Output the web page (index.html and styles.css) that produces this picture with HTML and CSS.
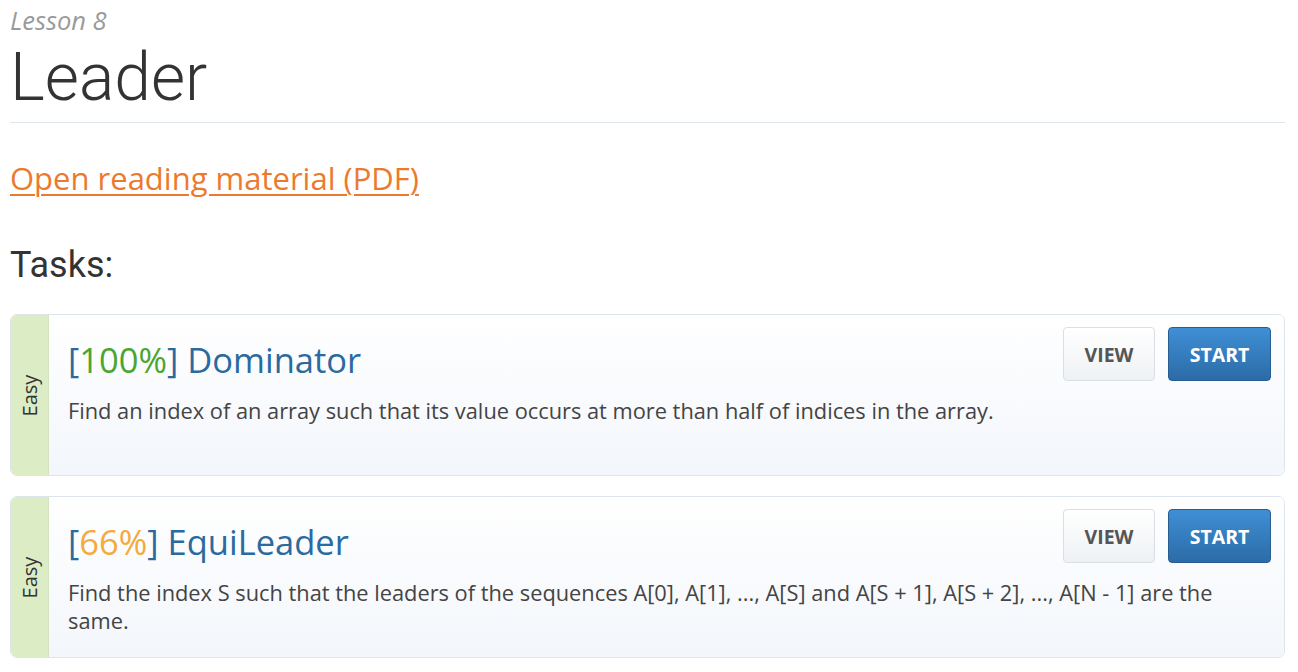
FILE: index.html
```html
<!DOCTYPE html>
<html>
<head>
<meta charset="utf-8">
<link rel="stylesheet" href="styles.css">
</head>
<body>
<div class="page">
  <div class="lesson">Lesson 8</div>
  <h1 class="title">Leader</h1>
  <hr class="rule">
  <a class="reading" href="#">Open reading material (PDF)</a>
  <h2 class="tasks">Tasks:</h2>

  <div class="card">
    <div class="side"><span>Easy</span></div>
    <div class="body">
      <div class="head">
        <div class="name"><span class="br">[</span><span class="pct good">100%</span><span class="br">]</span> Dominator</div>
        <div class="btns">
          <a class="btn view" href="#">VIEW</a>
          <a class="btn start" href="#">START</a>
        </div>
      </div>
      <p class="desc">Find an index of an array such that its value occurs at more than half of indices in the array.</p>
    </div>
  </div>

  <div class="card">
    <div class="side"><span>Easy</span></div>
    <div class="body">
      <div class="head">
        <div class="name"><span class="br">[</span><span class="pct mid">66%</span><span class="br">]</span> EquiLeader</div>
        <div class="btns">
          <a class="btn view" href="#">VIEW</a>
          <a class="btn start" href="#">START</a>
        </div>
      </div>
      <p class="desc">Find the index S such that the leaders of the sequences A[0], A[1], ..., A[S] and A[S + 1], A[S + 2], ..., A[N - 1] are the same.</p>
    </div>
  </div>
</div>
</body>
</html>
```

FILE: styles.css
```css
html, body {
  margin: 0;
  padding: 0;
  background: #ffffff;
}
.page {
  padding: 0 13px 0 10px;
  font-family: "Open Sans", "Liberation Sans", sans-serif;
  color: #333;
}
.lesson {
  font-style: italic;
  font-size: 25.5px;
  color: #9a9a9a;
  line-height: 32px;
  padding-top: 4px;
}
.title {
  font-family: Roboto, "Liberation Sans", sans-serif;
  font-weight: 300;
  font-size: 66px;
  line-height: 76px;
  margin: 4px 0 0 0;
  color: #333;
}
.rule {
  border: 0;
  border-top: 1px solid #dfe6ec;
  margin: 6px 0 0 0;
}
.reading {
  display: inline-block;
  margin-top: 35px;
  font-size: 31px;
  line-height: 40px;
  color: #ec7a2e;
  text-decoration: underline;
  text-decoration-thickness: 2px;
  text-underline-offset: 4px;
}
.tasks {
  font-family: Roboto, "Liberation Sans", sans-serif;
  font-weight: 400;
  font-size: 36px;
  line-height: 40px;
  margin: 47px 0 0 0;
  color: #333;
}
.card {
  display: flex;
  margin-top: 29px;
  border: 1px solid #dde4eb;
  border-radius: 7px;
  overflow: hidden;
  height: 162px;
  box-sizing: border-box;
}
.card + .card {
  margin-top: 20px;
}
.side {
  width: 37px;
  flex: none;
  background: #dcecc5;
  display: flex;
  align-items: center;
  justify-content: center;
  border-right: 1px solid #d4e2c0;
}
.side span {
  transform: rotate(-90deg);
  font-size: 20px;
  color: #333;
  white-space: nowrap;
}
.body {
  flex: 1;
  background: linear-gradient(#ffffff, #f3f6fb);
  padding: 12px 13px 0 19px;
}
.head {
  display: flex;
  justify-content: space-between;
  align-items: flex-start;
}
.name {
  font-size: 34.5px;
  line-height: 44px;
  color: #2b6aa0;
  margin-top: 11px;
}
.pct.good { color: #4aa630; }
.pct.mid { color: #f4aa3c; }
.btns {
  display: flex;
  gap: 13px;
}
.btn {
  display: flex;
  align-items: center;
  justify-content: center;
  height: 54px;
  box-sizing: border-box;
  border-radius: 4px;
  font-weight: 700;
  font-size: 19.5px;
  text-decoration: none;
}
.btn.view {
  width: 92px;
  background: linear-gradient(#ffffff, #eef1f4);
  border: 1px solid #d9dfe4;
  color: #555;
}
.btn.start {
  width: 103px;
  background: linear-gradient(#3f8fd5, #2c6ba7);
  border: 1px solid #275d91;
  color: #fff;
}
.desc {
  margin: 15px 0 0 0;
  padding-right: 30px;
  font-size: 21.8px;
  line-height: 28px;
  color: #444;
}
```
